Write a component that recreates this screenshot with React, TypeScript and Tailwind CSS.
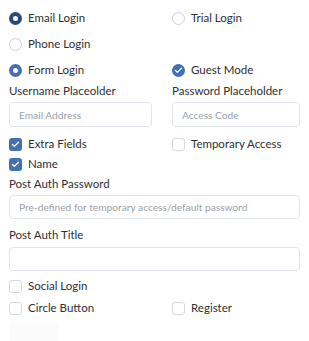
import { Check } from "lucide-react";

const Radio = ({ label, state }: { label: string; state: "dark" | "blue" | "off" }) => (
  <div className="flex h-[26px] items-center gap-[6px]">
    {state === "off" ? (
      <span className="h-[13px] w-[13px] rounded-full border-[1.5px] border-[#c9d1de] bg-white" />
    ) : (
      <span
        className={
          state === "dark"
            ? "flex h-[13px] w-[13px] items-center justify-center rounded-full bg-[#2b4a7b]"
            : "flex h-[13px] w-[13px] items-center justify-center rounded-full bg-[#4370b3]"
        }
      >
        <span className="h-[5px] w-[5px] rounded-full bg-white" />
      </span>
    )}
    <span>{label}</span>
  </div>
);

const Box = ({ label, checked, round }: { label: string; checked?: boolean; round?: boolean }) => (
  <div className="flex h-[20px] items-center gap-[6px]">
    {checked ? (
      <span
        className={
          round
            ? "flex h-[13px] w-[13px] items-center justify-center rounded-full bg-[#4370b3]"
            : "flex h-[13px] w-[13px] items-center justify-center rounded-[3px] bg-[#4370b3]"
        }
      >
        <Check size={9} strokeWidth={3.5} color="white" />
      </span>
    ) : (
      <span className="h-[13px] w-[13px] rounded-[3px] border-[1.5px] border-[#d3d9e3] bg-white" />
    )}
    <span>{label}</span>
  </div>
);

const Input = ({ placeholder, className }: { placeholder?: string; className: string }) => (
  <div
    className={
      "flex items-center rounded-[4px] border-[1.5px] border-[#e1e6ee] bg-white px-[9px] text-[10.2px] text-[#9aa1ab] " +
      className
    }
  >
    {placeholder}
  </div>
);

export default function App() {
  return (
    <div
      className="h-[341px] w-[309px] overflow-hidden bg-white px-[9px] pt-[5px] text-[11.5px] leading-[14px] text-[#2d2f33]"
      style={{ fontFamily: "Lato, 'Open Sans', sans-serif" }}
    >
      <div className="grid grid-cols-[163px_128px]">
        <Radio label="Email Login" state="dark" />
        <Radio label="Trial Login" state="off" />
        <Radio label="Phone Login" state="off" />
        <div />
        <Radio label="Form Login" state="blue" />
        <div className="flex h-[26px] items-center">
          <Box label="Guest Mode" checked round />
        </div>
        <div className="mt-[1px] flex flex-col gap-[4px]">
          <span>Username Placeolder</span>
          <Input placeholder="Email Address" className="h-[25px] w-[143px]" />
        </div>
        <div className="mt-[1px] flex flex-col gap-[4px]">
          <span>Password Placeholder</span>
          <Input placeholder="Access Code" className="h-[25px] w-[128px]" />
        </div>
        <div className="mt-[7px]">
          <Box label="Extra Fields" checked />
        </div>
        <div className="mt-[7px]">
          <Box label="Temporary Access" />
        </div>
      </div>
      <Box label="Name" checked />
      <div className="mt-[3px] flex flex-col gap-[4px]">
        <span>Post Auth Password</span>
        <Input placeholder="Pre-defined for temporary access/default password" className="h-[24px] w-[291px]" />
      </div>
      <div className="mt-[9px] flex flex-col gap-[5px]">
        <span>Post Auth Title</span>
        <Input className="h-[24px] w-[291px]" />
      </div>
      <div className="mt-[5px]">
        <Box label="Social Login" />
      </div>
      <div className="mt-[2px] grid grid-cols-[163px_128px]">
        <Box label="Circle Button" />
        <Box label="Register" />
      </div>
      <div className="mt-[4px] h-[20px] w-[50px] rounded-[3px] bg-[#fbfbfb]" />
    </div>
  );
}
